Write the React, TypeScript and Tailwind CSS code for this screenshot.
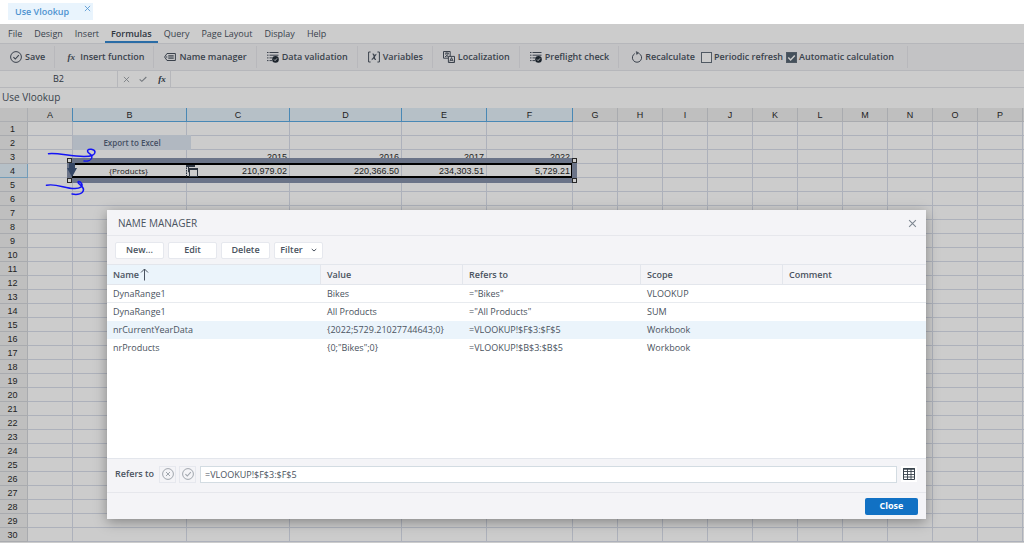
import React, { useState } from "react";
import clsx from "clsx";

const menuItems = ["File", "Design", "Insert", "Formulas", "Query", "Page Layout", "Display", "Help"];

const columns = "ABCDEFGHIJKLMNOP".split("");
const columnWidths: Record<string, string> = {
  A: "w-[45px]",
  B: "w-[114px]",
  C: "w-[103px]",
  D: "w-[112px]",
  E: "w-[85px]",
  F: "w-[86px]"
};
const selectedColumns = ["B", "C", "D", "E", "F"];
const rowCount = 30;

const cells: Record<string, string> = {
  C3: "2015",
  D3: "2016",
  E3: "2017",
  F3: "2022",
  C4: "210,979.02",
  D4: "220,366.50",
  E4: "234,303.51",
  F4: "5,729.21"
};

interface NamedRange {
  name: string;
  value: string;
  refersTo: string;
  scope: string;
}

const namedRanges: NamedRange[] = [
  { name: "DynaRange1", value: "Bikes", refersTo: '="Bikes"', scope: "VLOOKUP" },
  { name: "DynaRange1", value: "All Products", refersTo: '="All Products"', scope: "SUM" },
  { name: "nrCurrentYearData", value: "{2022;5729.21027744643;0}", refersTo: "=VLOOKUP!$F$3:$F$5", scope: "Workbook" },
  { name: "nrProducts", value: '{0;"Bikes";0}', refersTo: "=VLOOKUP!$B$3:$B$5", scope: "Workbook" }
];

function Icon({ children, className = "w-3 h-3" }: { children: React.ReactNode; className?: string }) {
  return (
    <svg viewBox="0 0 12 12" className={clsx("shrink-0", className)} fill="none" stroke="currentColor" aria-hidden="true">
      {children}
    </svg>
  );
}

const CheckCircleIcon = ({ className }: { className?: string }) => (
  <Icon className={className}>
    <circle cx="6" cy="6" r="5.4" strokeWidth="1" />
    <path d="M3.4 6.1 5.3 8l3.5-3.8" strokeWidth="1.1" />
  </Icon>
);

const CrossCircleIcon = ({ className }: { className?: string }) => (
  <Icon className={className}>
    <circle cx="6" cy="6" r="5.4" strokeWidth="1" />
    <path d="m4 4 4 4m0-4L4 8" strokeWidth="1" />
  </Icon>
);

const CrossIcon = ({ className }: { className?: string }) => (
  <Icon className={className}>
    <path d="m1.5 1.5 9 9m0-9-9 9" strokeWidth="1.4" />
  </Icon>
);

const FunctionIcon = () => (
  <span className="w-3 text-center font-['Liberation_Serif',serif] text-[9px] leading-3 font-bold italic">fx</span>
);

const NameIcon = () => (
  <Icon>
    <path d="M3 2.5h8.4v7H3L.6 6z" strokeWidth="1" />
    <path d="M4.3 4.7h5.4M4.3 6h5.4M4.3 7.3h5.4" strokeWidth="0.9" />
    <circle cx="2.7" cy="6" r="0.5" strokeWidth="0.6" />
  </Icon>
);

const ListCheckIcon = () => (
  <Icon>
    <path d="M0 1.5h1.5M0 4.2h1.5M0 6.9h1.5M0 9.6h1.5M2.5 1.5h9M2.5 4.2h9M2.5 6.9h3M2.5 9.6h2.5" strokeWidth="1" />
    <circle cx="8.5" cy="8.4" r="3.3" fill="#232d38" stroke="none" />
    <path d="m7 8.5 1.1 1.1L10 7.4" stroke="#f4f4f7" strokeWidth="0.9" />
  </Icon>
);

const VariableIcon = () => (
  <Icon>
    <path d="M2.6 1H.6v10h2M9.4 1h2v10h-2" strokeWidth="1" />
    <path d="M4.6 3.2c1.2-.3 1.2.4 1.6 2.6s.6 2.9 1.7 2.6M8.4 3.3c-1.4-.1-3 5.4-4.7 5.2" strokeWidth="1.3" />
  </Icon>
);

const LocalizationIcon = () => (
  <Icon>
    <path d="M.5.5h6.7v6.7H.5z" strokeWidth="1" />
    <path d="M1.9 2.2h4M3.9 1.3v1M5.3 2.4C4.8 4 3.6 5.2 2 5.8M2.6 3.2c.6 1.2 1.6 2 2.9 2.5" strokeWidth="1" />
    <path d="M5.4 5.4h6.1v6.1H5.4z" fill="#f4f4f7" strokeWidth="1" />
    <path d="m6.8 10.4 1.7-3.8 1.7 3.8M7.4 9.3h2.2" strokeWidth="1" />
  </Icon>
);

const RecalculateIcon = () => (
  <Icon>
    <path d="M3.8 2.6a4.6 4.6 0 1 0 4.4 0" strokeWidth="1" />
    <path d="M5.2.4 8 1.9 5.6 3.6z" fill="currentColor" strokeWidth="0.4" />
  </Icon>
);

const toolbarItems = [
  { label: "Save", icon: <CheckCircleIcon /> },
  { label: "Insert function", icon: <FunctionIcon /> },
  { label: "Name manager", icon: <NameIcon /> },
  { label: "Data validation", icon: <ListCheckIcon /> },
  { label: "Variables", icon: <VariableIcon /> },
  { label: "Localization", icon: <LocalizationIcon /> },
  { label: "Preflight check", icon: <ListCheckIcon /> }
];

function ToolbarCheckbox({ label, defaultChecked }: { label: string; defaultChecked?: boolean }) {
  return (
    <label className="flex items-center gap-[2px]">
      <span className="relative flex">
        <input
          type="checkbox"
          defaultChecked={defaultChecked}
          className="peer w-[11px] h-[11px] appearance-none border border-[#64707c] bg-white checked:bg-[#566472]"
        />
        <svg viewBox="0 0 11 11" className="absolute inset-0 hidden peer-checked:block" fill="none" stroke="#fff" strokeWidth="1.5">
          <path d="M2.3 5.6 4.6 8l4.2-4.6" />
        </svg>
      </span>
      {label}
    </label>
  );
}

function Ribbon() {
  return (
    <>
      <nav className="flex h-5 shrink-0 pl-[2px] border-b border-[#e4e5ea] text-[9px] text-[#4a5360]">
        {menuItems.map((item) => (
          <button
            key={item}
            className={clsx(
              "px-[6px] pt-[2px] border-b-2",
              item === "Formulas" ? "border-[#3588d0] font-semibold text-[#3a4450]" : "border-transparent"
            )}
          >
            {item}
          </button>
        ))}
      </nav>
      <div className="flex items-center h-[27px] shrink-0 border-b border-[#e4e5ea] bg-[#f4f4f7] text-[9px] font-semibold text-[#4a5360]">
        {toolbarItems.map((item) => (
          <button key={item.label} className="flex items-center gap-[3px] h-[22px] pl-[10px] pr-[9px] border-r border-[#e6e7ec] whitespace-nowrap">
            {item.icon}
            {item.label}
          </button>
        ))}
        <div className="flex items-center gap-[6px] h-[22px] pl-3 pr-[13px] border-r border-[#e6e7ec] whitespace-nowrap">
          <button className="flex items-center gap-[2px]">
            <RecalculateIcon />
            Recalculate
          </button>
          <div className="flex items-center gap-[3px]">
            <ToolbarCheckbox label="Periodic refresh" />
            <ToolbarCheckbox label="Automatic calculation" defaultChecked />
          </div>
        </div>
      </div>
      <div className="flex h-[17px] shrink-0 border-b border-[#e4e5ea] text-[#3a4450]">
        <input aria-label="Name box" defaultValue="B2" className="w-[118px] border-r border-[#e4e5ea] text-center text-[9px]" />
        <div className="flex items-center gap-[9px] w-[53px] pl-[5px] border-r border-[#e4e5ea]">
          <button aria-label="Cancel" className="text-[#8f959c]">
            <CrossIcon className="w-[7px] h-[7px]" />
          </button>
          <button aria-label="Accept" className="text-[#8f959c]">
            <Icon className="w-[8px] h-[8px]">
              <path d="m1 6.5 3.3 3L11 3" strokeWidth="1.6" />
            </Icon>
          </button>
          <button aria-label="Insert function" className="flex">
            <FunctionIcon />
          </button>
        </div>
        <input aria-label="Formula" className="flex-1 min-w-0 px-1 text-[9px]" />
      </div>
      <h1 className="h-5 shrink-0 pl-[2px] text-[10px] leading-[19px] text-[#4a5360]">Use Vlookup</h1>
    </>
  );
}

// Frame around B4:F4 with resize handles and the range arrow
function RangeFrame() {
  const handle = "absolute w-[5px] h-[5px] border border-[#333] bg-white";
  return (
    <div className="absolute top-[50px] left-[67px] w-[510px] h-[25px] border-[5px] border-[#8692ab] pointer-events-none">
      <div className="h-full border-x border-y-2 border-black" />
      <span className={clsx(handle, "-top-[5px] -left-[5px]")} />
      <span className={clsx(handle, "-top-[5px] -right-[5px]")} />
      <span className={clsx(handle, "-bottom-[5px] -left-[5px]")} />
      <span className={clsx(handle, "-bottom-[5px] -right-[5px]")} />
      <svg viewBox="0 0 10 14" className="absolute top-0 -left-[5px] w-[10px] h-[14px]" fill="#41587f">
        <path d="M2 0h6v5h2L5 14 0 5h2z" />
      </svg>
      <svg viewBox="0 0 14 13" className="absolute top-[2px] left-[113px] w-[14px] h-[13px]" fill="none" stroke="#38424f">
        <path d="M1.500 0v12" strokeDasharray="1.5 1" />
        <path d="M9 1H3.500v6h1" fill="#fff" />
        <path d="M1 1h9" strokeWidth="2" />
        <path d="M4.500 3.500h8v8h-8z" fill="#fff" />
        <path d="M4 4h9" strokeWidth="2" />
      </svg>
    </div>
  );
}

function SheetGrid() {
  return (
    <div className="relative flex-1 min-h-0 overflow-hidden font-['Liberation_Sans',Arial,sans-serif] text-[9px] text-[#2b2b2b]">
      <table className="w-full table-fixed border-separate border-spacing-0">
        <colgroup>
          <col className="w-[28px]" />
          {columns.map((col) => (
            <col key={col} className={columnWidths[col] ?? "w-[45px]"} />
          ))}
          <col />
        </colgroup>
        <thead>
          <tr className="h-[14px]">
            <th className="p-0 border-r border-b border-[#d8dadf] bg-[#efefef]" />
            {columns.map((col) => (
              <th
                key={col}
                className={clsx(
                  "p-0 pt-px border-r border-b font-normal leading-3",
                  selectedColumns.includes(col) ? "border-[#5cabe3] bg-[#e4f0f9]" : "border-[#d4d6db] bg-[#efefef]",
                  col === "A" && "border-r-[#5cabe3]"
                )}
              >
                {col}
              </th>
            ))}
            <th className="p-0 border-b border-[#d4d6db] bg-[#efefef]" />
          </tr>
        </thead>
        <tbody>
          {Array.from({ length: rowCount }, (_, i) => i + 1).map((row) => (
            <tr key={row} className="h-[14px]">
              <th
                className={clsx(
                  "p-0 pt-px pr-[2px] border-r border-b font-normal leading-3",
                  row === 4 ? "border-[#8fc3e8] bg-[#e4f0f9]" : "border-[#d4d6db] bg-[#efefef]"
                )}
              >
                {row}
              </th>
              {columns.map((col) => (
                <td key={col} className="relative p-0 pt-px pr-[2px] border-r border-b border-[#d9deea] text-right leading-3">
                  {cells[`${col}${row}`]}
                  {col === "B" && row === 4 && (
                    <span className="block text-center font-['Open_Sans',sans-serif] text-[8px]">{"{Products}"}</span>
                  )}
                  {col === "B" && row === 2 && (
                    <button className="absolute -top-px left-0 z-10 w-[118px] h-[15px] pt-px bg-[#dee7f2] font-['Open_Sans',sans-serif] text-[8px] font-semibold text-[#56647c]">
                      Export to Excel
                    </button>
                  )}
                </td>
              ))}
              <td className="p-0 border-b border-[#d9deea]" />
            </tr>
          ))}
        </tbody>
      </table>
      <RangeFrame />
    </div>
  );
}

// Hand drawn arrows pointing at the range
function Annotations() {
  return (
    <svg
      viewBox="0 0 48 50"
      className="absolute top-[122px] left-[44px] w-[48px] h-[50px] overflow-visible pointer-events-none"
      fill="none"
      stroke="#1414f5"
      strokeWidth="1.5"
      strokeLinecap="round"
      strokeLinejoin="round"
    >
      <path d="M4.500 7.700C14 6.500 26 10.500 40 10.500c6 0 11-1.500 11-4.500s-7.500-4-7.500-1 5 3 4.500 6-4 4.500-8 4" />
      <path d="M2.500 39.300C12 37 22 43 31 42.500c5-.3 8.500-2 6.500-5s-4.500-2-3-.3c2 2.300 5.500 3.800 5 6.800-.5 4-6 5-11.500 4" />
    </svg>
  );
}

function NameManagerDialog() {
  const [selected, setSelected] = useState(2);
  const toolButton =
    "flex items-center justify-center w-[49px] h-[17px] rounded-[2px] border border-[#e6e8ee] bg-white font-semibold";
  const headCell = "p-0 pl-[6px] border-r border-b border-[#e3e6ec] text-left font-semibold";

  return (
    <section
      role="dialog"
      aria-labelledby="name-manager-title"
      className="w-full bg-[#f4f4f7] text-[9px] text-[#4a5360] shadow-[0_3px_12px_rgba(0,0,0,0.35)]"
    >
      <header className="flex items-center justify-between h-[26px] pt-px pl-[11px] pr-[9px] border-b border-[#e6e7ec]">
        <h2 id="name-manager-title" className="text-[10px]">NAME MANAGER</h2>
        <button aria-label="Close dialog" className="text-[#7c858f]">
          <CrossIcon className="w-[9px] h-[9px]" />
        </button>
      </header>

      <div className="flex items-center gap-1 h-[28px] pl-2">
        <button className={toolButton}>New...</button>
        <button className={toolButton}>Edit</button>
        <button className={toolButton}>Delete</button>
        <button className={clsx(toolButton, "gap-2")}>
          Filter
          <Icon className="w-[6px] h-[6px]">
            <path d="m1.500 4 4.500 4 4.500-4" strokeWidth="2" />
          </Icon>
        </button>
      </div>

      <div className="min-h-[195px] border-t border-b border-[#e3e6ec] bg-white">
        <table className="w-full table-fixed border-separate border-spacing-0">
          <colgroup>
            <col className="w-[214px]" />
            <col className="w-[142px]" />
            <col className="w-[178px]" />
            <col className="w-[142px]" />
            <col />
          </colgroup>
          <thead>
            <tr className="h-[20px] bg-[#f4f4f7]">
              <th className={clsx(headCell, "bg-[#ebf4fb]")}>
                <span className="flex items-center gap-px">
                  Name
                  <svg viewBox="0 0 9 13" className="w-[9px] h-[13px]" fill="none" stroke="currentColor" strokeWidth="1">
                    <path d="M4.500 12.500V1M1 4.500 4.500 1 8 4.500" />
                  </svg>
                </span>
              </th>
              <th className={headCell}>Value</th>
              <th className={headCell}>Refers to</th>
              <th className={headCell}>Scope</th>
              <th className={clsx(headCell, "border-r-0")}>Comment</th>
            </tr>
          </thead>
          <tbody>
            {namedRanges.map((range, idx) => (
              <tr
                key={idx}
                onClick={() => setSelected(idx)}
                className={clsx("h-[18px] leading-4", idx === selected && "bg-[#ebf4fb]")}
              >
                {[range.name, range.value, range.refersTo, range.scope, ""].map((text, cellIdx) => (
                  <td key={cellIdx} className={clsx("p-0 pl-[6px] border-b", idx === 0 ? "border-[#e8ebef]" : "border-transparent")}>
                    {text}
                  </td>
                ))}
              </tr>
            ))}
          </tbody>
        </table>
      </div>

      <div className="flex items-center h-[34px] pb-[3px] pl-2 pr-[9px] border-b border-[#e6e7ec]">
        <label htmlFor="refers-to" className="w-[44px] font-semibold">Refers to</label>
        <button aria-label="Discard" className="flex items-center justify-center w-[17px] h-[17px] border border-[#e6e8ee] text-[#a0a6ad]">
          <CrossCircleIcon />
        </button>
        <button aria-label="Apply" className="flex items-center justify-center w-[17px] h-[17px] ml-[3px] mr-1 border border-[#e6e8ee] text-[#a0a6ad]">
          <CheckCircleIcon />
        </button>
        <input
          id="refers-to"
          defaultValue="=VLOOKUP!$F$3:$F$5"
          className="flex-1 min-w-0 h-[17px] px-1 border border-[#d3dce2] bg-white"
        />
        <button aria-label="Select range" className="flex items-center justify-center w-4 h-4 ml-1 bg-white text-[#39434d]">
          <Icon>
            <path d="M.5.5h11v11H.5z" strokeWidth="1" />
            <path d="M0 1h12" strokeWidth="1.5" />
            <path d="M.5 3.500h11M.5 6.500h11M.5 9h11M4.500 1v10.500M8 1v10.500" strokeWidth="0.9" />
          </Icon>
        </button>
      </div>

      <footer className="flex items-center justify-end h-[26px] pr-2">
        <button className="w-[53px] h-[17px] rounded-[2px] bg-[#1171c4] font-bold text-white">Close</button>
      </footer>
    </section>
  );
}

export default function App() {
  return (
    <div className="flex flex-col h-screen overflow-hidden bg-white font-['Open_Sans',sans-serif]">
      <div className="flex h-6 shrink-0 pl-2 pt-[3px]">
        <div className="flex w-[85px] h-[17px] pl-[7px] pr-[2px] justify-between bg-[#e9f4fd] text-[#4e93d0]">
          <a href="#" className="text-[9px] leading-[17px] font-semibold">Use Vlookup</a>
          <button aria-label="Close tab" className="self-start pt-[2px]">
            <CrossIcon className="w-[7px] h-[7px]" />
          </button>
        </div>
      </div>
      <main className="relative flex flex-col flex-1 min-h-0 overflow-hidden">
        <Ribbon />
        <SheetGrid />
        <div className="absolute inset-0 z-20 pt-[186px] pl-[107px] pr-[98px] bg-black/20">
          <Annotations />
          <NameManagerDialog />
        </div>
      </main>
    </div>
  );
}
